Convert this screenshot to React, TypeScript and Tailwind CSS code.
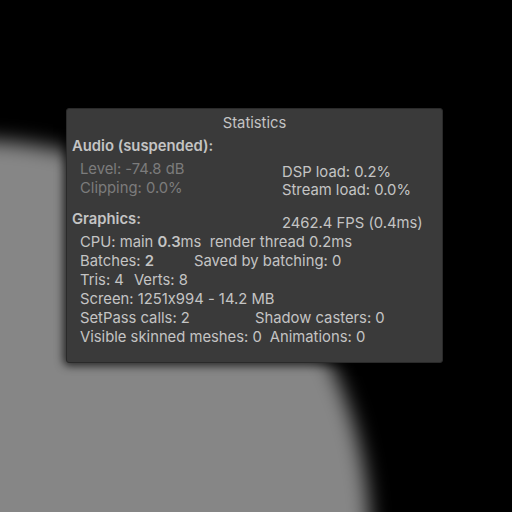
export default function App() {
  return (
    <div className="relative h-[512px] w-[512px] overflow-hidden bg-black font-['Inter',sans-serif] text-[14.8px] leading-[19px] text-[#c4c4c4] [font-feature-settings:'calt'_0]">
      {/* scene sphere behind the overlay */}
      <div className="absolute left-[-422px] top-[140px] h-[792px] w-[792px] rounded-full bg-[#868686] blur-[10px]" />

      <div className="absolute left-[66px] top-[108px] flex h-[255px] w-[377px] flex-col rounded-[3px] border border-[#2a2a2a] bg-[#3a3a3a] px-[5px] pt-[5px] shadow-[0_0_8px_3px_rgba(0,0,0,0.7)]">
        <div className="text-center">Statistics</div>

        <div className="mt-[4px] flex">
          <div className="w-[210px]">
            <div className="font-semibold">Audio (suspended):</div>
            <div className="mt-[4px] pl-[8px] text-[#7c7c7c]">
              <div>Level: -74.8 dB</div>
              <div>Clipping: 0.0%</div>
            </div>
          </div>
          <div className="pt-[26px] leading-[18px]">
            <div>DSP load: 0.2%</div>
            <div>Stream load: 0.0%</div>
          </div>
        </div>

        <div className="mt-[11px] flex">
          <div className="w-[210px] font-semibold">Graphics:</div>
          <div className="pt-[4px]">2462.4 FPS (0.4ms)</div>
        </div>

        <div className="pl-[8px]">
          <div className="whitespace-pre">
            CPU: main <span className="font-semibold">0.3</span>ms  render thread 0.2ms
          </div>
          <div className="flex">
            <div className="w-[114px]">
              Batches: <span className="font-semibold">2</span>
            </div>
            <div>Saved by batching: 0</div>
          </div>
          <div className="flex gap-[10px]">
            <span>Tris: 4</span>
            <span>Verts: 8</span>
          </div>
          <div>Screen: 1251x994 - 14.2 MB</div>
          <div className="flex">
            <div className="w-[175px]">SetPass calls: 2</div>
            <div>Shadow casters: 0</div>
          </div>
          <div className="flex gap-[8px]">
            <span>Visible skinned meshes: 0</span>
            <span>Animations: 0</span>
          </div>
        </div>
      </div>
    </div>
  );
}
